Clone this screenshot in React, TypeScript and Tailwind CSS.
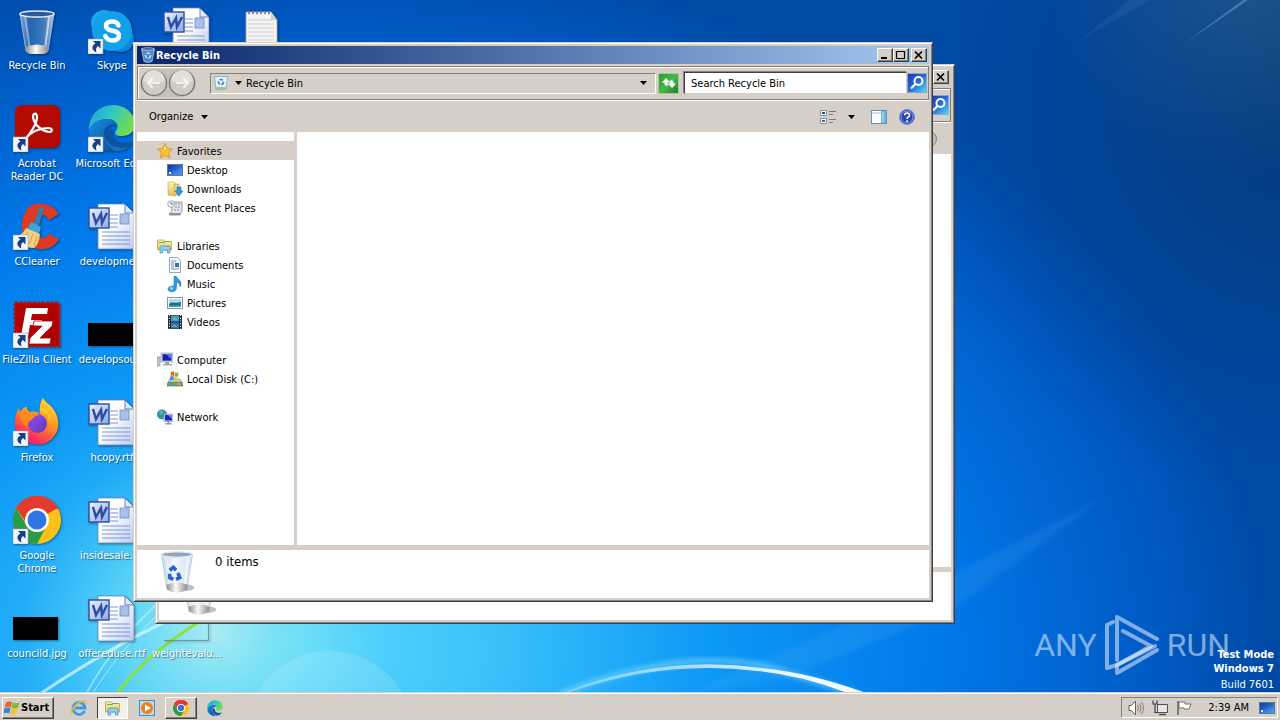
import type { ReactNode } from "react";
import clsx from "clsx";

const uiFont = "font-['Tahoma','DejaVu_Sans_Condensed','Roboto',sans-serif]";
const boldFont = "font-['Tahoma','DejaVu_Sans_Condensed','Roboto',sans-serif] font-bold";

const raised =
  "border border-t-white border-l-white border-r-[#404040] border-b-[#404040] bg-[#d5cfc8] shadow-[inset_-1px_-1px_0_#848078]";

/* ---------- shared gradients ---------- */

function Gradients() {
  return (
    <svg className="absolute h-0 w-0" aria-hidden="true">
      <defs>
        <linearGradient id="glass" x1="0" x2="1">
          <stop offset="0" stopColor="#b9d6f2" stopOpacity=".75" />
          <stop offset=".3" stopColor="#4f8fd8" stopOpacity=".45" />
          <stop offset=".7" stopColor="#7fb2e6" stopOpacity=".5" />
          <stop offset="1" stopColor="#d8e8f6" stopOpacity=".85" />
        </linearGradient>
        <linearGradient id="paleGlass" x1="0" x2="1">
          <stop offset="0" stopColor="#c4d8ea" />
          <stop offset=".4" stopColor="#f2f8fd" />
          <stop offset="1" stopColor="#d4e2ee" />
        </linearGradient>
        <linearGradient id="base" x1="0" x2="1">
          <stop offset="0" stopColor="#8c8c8c" />
          <stop offset=".45" stopColor="#fafafa" />
          <stop offset="1" stopColor="#8a8a8a" />
        </linearGradient>
        <linearGradient id="paper" x1="0" y1="0" x2="1" y2="1">
          <stop offset=".4" stopColor="#ffffff" />
          <stop offset="1" stopColor="#b9c9f0" />
        </linearGradient>
        <linearGradient id="wordBadge" x1="0" y1="0" x2="1" y2="1">
          <stop offset="0" stopColor="#eef3ff" />
          <stop offset="1" stopColor="#8fa8e0" />
        </linearGradient>
        <linearGradient id="edgeTop" x1="0" y1="0" x2="1" y2=".4">
          <stop offset="0" stopColor="#1f9fe0" />
          <stop offset=".5" stopColor="#30c6c6" />
          <stop offset="1" stopColor="#6fdc52" />
        </linearGradient>
        <linearGradient id="edgeLow" x1="0" y1="0" x2="1" y2="1">
          <stop offset="0" stopColor="#1b8ee0" />
          <stop offset="1" stopColor="#0b4a90" />
        </linearGradient>
        <linearGradient id="foxFlame" x1=".8" y1="0" x2=".3" y2="1">
          <stop offset="0" stopColor="#ffe23c" />
          <stop offset=".45" stopColor="#ff9422" />
          <stop offset=".8" stopColor="#ff3a50" />
          <stop offset="1" stopColor="#e01890" />
        </linearGradient>
        <linearGradient id="foxCore" x1="0" y1="0" x2="1" y2="1">
          <stop offset="0" stopColor="#9b4be8" />
          <stop offset="1" stopColor="#5a3cc0" />
        </linearGradient>
        <linearGradient id="screen" x1="0" y1="0" x2="1" y2="1">
          <stop offset="0" stopColor="#0a3a9c" />
          <stop offset=".5" stopColor="#2864c8" />
          <stop offset="1" stopColor="#6ab0ec" />
        </linearGradient>
        <linearGradient id="folder" x1="0" y1="0" x2="0" y2="1">
          <stop offset="0" stopColor="#fff3b4" />
          <stop offset="1" stopColor="#e6c050" />
        </linearGradient>
      </defs>
    </svg>
  );
}

/* ---------- wallpaper ---------- */

function Wallpaper() {
  return (
    <svg
      className="absolute inset-0 h-full w-full"
      viewBox="0 0 1280 692"
      preserveAspectRatio="xMidYMid slice"
      aria-hidden="true"
    >
      <defs>
        <radialGradient id="sky" gradientUnits="userSpaceOnUse" cx="0" cy="0" r="1" gradientTransform="translate(310 650) scale(960 700)">
          <stop offset="0" stopColor="#58d6fa" />
          <stop offset=".18" stopColor="#3cc4fa" />
          <stop offset=".42" stopColor="#0c98f6" />
          <stop offset=".66" stopColor="#0078ea" />
          <stop offset=".88" stopColor="#005ac4" />
          <stop offset="1.0" stopColor="#004aa6" />
        </radialGradient>
        <radialGradient id="corner" gradientUnits="userSpaceOnUse" cx="0" cy="0" r="1" gradientTransform="translate(1320 110) scale(420 400)">
          <stop offset="0" stopColor="#043a78" />
          <stop offset=".4" stopColor="#043c80" stopOpacity=".65" />
          <stop offset="1" stopColor="#00409a" stopOpacity="0" />
        </radialGradient>
        <radialGradient id="haze" gradientUnits="userSpaceOnUse" cx="1250" cy="-20" r="200">
          <stop offset="0" stopColor="#3c6c90" stopOpacity=".45" />
          <stop offset="1" stopColor="#3c6c90" stopOpacity="0" />
        </radialGradient>
        <radialGradient id="glow" gradientUnits="userSpaceOnUse" cx="0" cy="0" r="1" gradientTransform="translate(215 630) scale(190 190)">
          <stop offset="0" stopColor="#b4f0f2" stopOpacity=".9" />
          <stop offset=".5" stopColor="#7fe6f4" stopOpacity=".5" />
          <stop offset="1" stopColor="#58d6fa" stopOpacity="0" />
        </radialGradient>
        <linearGradient id="arc" x1="0" x2="1">
          <stop offset="0" stopColor="#fff" stopOpacity=".25" />
          <stop offset=".7" stopColor="#fff" stopOpacity=".9" />
          <stop offset="1" stopColor="#fff" />
        </linearGradient>
        <filter id="soft">
          <feGaussianBlur stdDeviation="2.5" />
        </filter>
      </defs>
      <rect width="1280" height="692" fill="url(#sky)" />
      <rect width="1280" height="692" fill="url(#corner)" />
      <rect width="1280" height="692" fill="url(#haze)" />
      <rect width="1280" height="692" fill="url(#glow)" />
      <circle cx="330" cy="735" r="84" fill="#fff" opacity=".13" />
      <path d="M40 694Q120 640 200 606" stroke="#d6f6ff" strokeWidth="3" fill="none" opacity=".75" />
      <path d="M86 694Q115 640 172 590" stroke="#d6f6ff" strokeWidth="2" fill="none" opacity=".5" />
      <path d="M92 694Q125 640 185 590" stroke="#d6f6ff" strokeWidth="1" fill="none" opacity=".6" />
      <path d="M118 692Q150 650 215 612" stroke="#8ee03c" strokeWidth="3" fill="none" />
      <path d="M690 692L900 600L1100 500L950 612L780 680z" fill="#6fc4ff" opacity=".12" filter="url(#soft)" />
      <path d="M560 694Q700 640 790 674Q840 688 872 700" stroke="#8fe4ff" strokeWidth="6" fill="none" opacity=".5" filter="url(#soft)" />
      <path d="M560 694Q660 654 762 668Q820 674 884 700L864 700Q810 676 757 671Q660 659 564 694z" fill="url(#arc)" />
      <path d="M1185 43L1248 0L1243 0z" fill="#9cc4f0" opacity=".35" />
      <path d="M1080 40L1150 0L1130 0z" fill="#9cc4f0" opacity=".08" />
    </svg>
  );
}

/* ---------- large desktop art, 48 x 48 ---------- */

function Art({ children, shortcut = false }: { children: ReactNode; shortcut?: boolean }) {
  return (
    <svg className="h-12 w-12 shrink-0 drop-shadow-[1px_1px_1px_#00000066]" viewBox="0 0 48 48" aria-hidden="true">
      {children}
      {shortcut && (
        <g>
          <rect x="0" y="33" width="15" height="15" fill="#f4f6fa" stroke="#9aa8bc" strokeWidth=".6" />
          <path d="M5 35h7.500v7.500L10 40c-2 1.500-2.500 3.500-1.500 6.500-5-2-5.500-7 -1-9z" fill="#173e86" />
        </g>
      )}
    </svg>
  );
}

function BinShape({ pale = false }: { pale?: boolean }) {
  return (
    <g>
      <path d="M7 5L13 42Q24 49 35 42L41 5z" fill={pale ? "url(#paleGlass)" : "url(#glass)"} stroke="#a8c0d8" strokeWidth=".8" />
      <path d="M12 8L17 40" stroke="#fff" strokeOpacity=".4" strokeWidth="2" />
      <path d="M36 8L32 40" stroke="#fff" strokeOpacity=".6" strokeWidth="2" />
      <path d="M12.500 38Q24 33 35.500 38L35 43Q24 50 13 43z" fill="url(#base)" />
      <ellipse cx="24" cy="5" rx="17" ry="3" fill={pale ? "#8fa6bc" : "#2a5aa0"} stroke="#dfe9f2" strokeWidth="1.500" />
    </g>
  );
}

function RecycleArrows() {
  return (
    <g fill="none" stroke="#2a64cc" strokeWidth="4">
      <path d="M16 22l4-3 3 3" />
      <path d="M25 25l2 5-4 2" />
      <path d="M20 32l-4-2 0-4" />
    </g>
  );
}

function WordArt() {
  return (
    <Art>
      <path d="M10 2h27l9 9v36H10z" fill="url(#paper)" stroke="#6f86b8" strokeWidth=".8" />
      <path d="M37 2v9h9z" fill="#dfe8fb" stroke="#4a66a8" strokeWidth=".8" />
      <path d="M22 13h8M22 17h8M22 21h8M22 25h8M14 30h28M14 34h28M14 38h28M14 42h28" stroke="#7f97d4" strokeWidth="1.200" />
      <rect x="32" y="12" width="9" height="10" fill="#a9c0e8" stroke="#6f8ccc" strokeWidth=".8" />
      <rect x="1" y="6" width="20" height="20" fill="url(#wordBadge)" stroke="#2f55ac" strokeWidth="1.500" />
      <path d="M5 11l3 10 5-9 1 9 5-10" fill="none" stroke="#2a4ea8" strokeWidth="2.500" />
    </Art>
  );
}

function NotepadArt() {
  return (
    <Art>
      <path d="M8 6h25l6 8v33H8z" fill="#f4f4f2" stroke="#a8a8a8" strokeWidth=".8" />
      <path d="M33 6v8h6z" fill="#cfcfcf" />
      <path d="M10 7h22" stroke="#909090" strokeWidth="2.500" strokeDasharray="2 2" />
      <path d="M10 14h24M10 18h26M10 22h26M10 26h26M10 30h26M10 34h26M10 38h26" stroke="#c8d0d8" />
    </Art>
  );
}

function BlackArt() {
  return (
    <Art>
      <rect x="0" y="23" width="45" height="23" fill="#000" />
    </Art>
  );
}

function OutlineArt() {
  return (
    <Art>
      <path d="M1 46.500H45.500V10" fill="none" stroke="#6a8a90" strokeOpacity=".8" />
    </Art>
  );
}

function SkypeArt() {
  return (
    <Art shortcut>
      <circle cx="16" cy="17" r="13" fill="#1aa8ea" />
      <circle cx="33" cy="33" r="13" fill="#0a86dc" />
      <circle cx="24" cy="25" r="20" fill="#12a0ea" />
      <path
        d="M30.500 19.500C29.500 16.500 27.500 15.500 24 15.500c-4 0-6 1.700-6 4.300 0 6.700 13 3.200 13 9.700 0 3-2.500 5-6.500 5-3.800 0-6-1.500-7.200-4.500"
        fill="none"
        stroke="#fff"
        strokeWidth="4.500"
        strokeLinecap="round"
      />
    </Art>
  );
}

function AcrobatArt() {
  return (
    <Art shortcut>
      <rect x="2" y="1" width="45" height="43" rx="7" fill="#b30b00" />
      <path
        d="M12 35c5-5 12-15 12-22 0-5-4-4-4 0 1 8 9 14 16 15 4 0 4-4-1-4-8 0-17 4-23 11z"
        fill="none"
        stroke="#fff"
        strokeWidth="2.200"
        strokeLinejoin="round"
      />
    </Art>
  );
}

function EdgeShape() {
  return (
    <g>
      <path d="M1 27C0 12 11 1 25 1s22 10 22 19c0 8-6 12-13 12-6 0-8-2-6-5 4-6-1-12-9-12C10 15 3 20 1 27z" fill="url(#edgeTop)" />
      <path d="M1 27c2-7 9-12 18-12 5 0 9 2 10 6-6-2-13 2-13 10 0 7 5 13 11 16C12 49 1 40 1 27z" fill="url(#edgeLow)" />
      <path d="M16 31c0 9 8 14 16 14 6 0 10-3 13-8-3 1-6 2-9 2-9 0-14-6-12-14-4 0-8 2-8 6z" fill="#0e549c" />
      <path d="M27 47c-6-3-11-9-11-16 3 9 10 13 18 13 5 0 9-3 11-6-4 6-10 10-18 9z" fill="#1770c0" />
    </g>
  );
}

function CCleanerArt() {
  return (
    <Art shortcut>
      <path d="M46 12C38-1 20-2 13 9c-8 12-4 32 8 37 10 3 20 0 25-9l-10-5c-3 5-8 5-11 1-4-5-3-14 1-18 3-3 8-2 10 3z" fill="#dc3a22" />
      <path d="M27 5l4 1-5 18-6-2z" fill="#2d7fb4" />
      <path d="M18 20l10 5-2 7-12-4z" fill="#3fa4dc" />
      <path d="M13 26l14 6c-1 7-2 11-6 14-8 0-15-5-18-11 5-2 8-5 10-9z" fill="#f2cf86" />
      <path d="M15 30l-6 8M20 32l-4 10M24 34l-3 10" stroke="#d2a24c" />
    </Art>
  );
}

function FileZillaArt() {
  return (
    <Art shortcut>
      <rect x="2" y="3" width="44" height="43" fill="#b00000" stroke="#c40808" strokeWidth="3" strokeDasharray="2.500 2" />
      <path d="M13 8h22l-1 6H19l-1 6h11l-1 5H17l-2 11H8z" fill="#fff" />
      <path d="M21 21h19l-1 5-12 12h11l-1 6H16l1-6 12-12h-9z" fill="#fff" stroke="#b00000" strokeWidth=".8" />
    </Art>
  );
}

function FirefoxArt() {
  return (
    <Art shortcut>
      <path
        d="M30 0c2 4 8 7 11 12 5 7 6 18 1 25-5 8-14 11-22 9C8 43 1 35 2 23c0-5 2-10 4-13l1 4c2-3 4-5 7-5 0 2 1 4 3 5 4-1 8 0 10 2-1-5 0-12 3-16z"
        fill="url(#foxFlame)"
      />
      <circle cx="24.500" cy="25.500" r="9.500" fill="url(#foxCore)" />
      <path d="M7 18c3-4 7-5 10-4 3 0 7 1 9 4-5-1-4 2-8 4-3 2-4 3-4 7-4-2-6-7-7-11z" fill="#ff8a1c" />
      <path d="M27 12c7 2 10 8 9 14 3-7 0-15-9-17z" fill="#ffc62c" />
    </Art>
  );
}

function ChromeShape() {
  return (
    <g>
      <circle cx="24" cy="24" r="24" fill="#fbc116" />
      <path d="M24 24L3.200 12A24 24 0 0 1 44.800 12z" fill="#e33b2e" />
      <path d="M24 13H45.500A24 24 0 0 0 3.200 12L14 28z" fill="#e33b2e" />
      <path d="M3.200 12L14.500 31 24 35 33 31 24 48A24 24 0 0 1 3.200 12z" fill="#2a9c48" />
      <circle cx="24" cy="24" r="12" fill="#fff" />
      <circle cx="24" cy="24" r="9.500" fill="#2f74e4" />
    </g>
  );
}

/* ---------- small icons, 16 x 16 ---------- */

function Small({ children, box = "0 0 16 16" }: { children: ReactNode; box?: string }) {
  return (
    <svg className="h-4 w-4 shrink-0" viewBox={box} aria-hidden="true">
      {children}
    </svg>
  );
}

const StarIcon = () => (
  <Small>
    <path d="M8 .5l2.300 5 5.200.6-3.900 3.500 1.100 5.400L8 12.400 3.300 15l1.100-5.400L.5 6.100l5.200-.6z" fill="#fcc030" stroke="#e08a18" strokeWidth=".8" />
    <path d="M8 3l1.300 3.200H6.700z" fill="#fff2b0" />
  </Small>
);

const DesktopIcon = () => (
  <Small>
    <rect x=".5" y="2.500" width="15" height="11" fill="url(#screen)" stroke="#5878a8" />
    <path d="M1 13c3-4 8-4 14-7v7z" fill="#3a8ce4" opacity=".5" />
    <rect x="2" y="10" width="2" height="2" fill="#d8f0ff" />
  </Small>
);

const DownloadsIcon = () => (
  <Small>
    <path d="M1 1h6l2 2v12L1 14z" fill="url(#folder)" stroke="#c8a040" strokeWidth=".6" />
    <path d="M7 3h5v11H7z" fill="#f0cf70" stroke="#c8a040" strokeWidth=".6" />
    <path d="M10 6h4v4h2l-4 5-4-5h2z" fill="#2f9ae8" stroke="#1868b0" strokeWidth=".6" />
  </Small>
);

const RecentIcon = () => (
  <Small>
    <path d="M4 2h11v9l-2 4H3l2-5z" fill="#e4e8ec" stroke="#788490" strokeWidth=".8" />
    <path d="M8 4h5M8 7h5M7 10h5" stroke="#6a8cb0" strokeDasharray="2 1" />
    <path d="M2 13h12l-1 2H2z" fill="#909090" />
    <circle cx="4" cy="4" r="3.300" fill="#f0f4f8" stroke="#8090a0" strokeWidth=".7" />
    <path d="M4 2v2h2" stroke="#405060" strokeWidth=".7" fill="none" />
  </Small>
);

const LibrariesIcon = () => (
  <Small>
    <path d="M.5 2h6l1 1.500h7V12H.5z" fill="url(#folder)" stroke="#c4a040" strokeWidth=".8" />
    <path d="M2 4.500h5l1-1h5" stroke="#58b060" strokeWidth="1.200" fill="none" />
    <path d="M3 15V9.500Q3 8 4.500 8h7Q13 8 13 9.500V15h-2.500v-3h-5v3z" fill="#8ccdf0" stroke="#3f8cc4" strokeWidth=".7" />
  </Small>
);

const DocumentsIcon = () => (
  <Small>
    <path d="M2.500.5h8l3 3v12h-11z" fill="#fcfdff" stroke="#7890a8" strokeWidth=".8" />
    <path d="M4 4h5M4 6h3M4 8h3M4 10h3M4 12h8" stroke="#6a90b8" />
    <rect x="8" y="6" width="4" height="4" fill="#2f6cb4" />
  </Small>
);

const MusicIcon = () => (
  <Small>
    <path d="M9 0c1 3 5 3.500 5 8 0 1-.5 2-1 3-.2-3-1.500-4-3.500-5v6c0 2-2 4-4.500 4S1 14.500 1 13s2-3.500 6-3V0z" fill="#2f9ae0" stroke="#1670b8" strokeWidth=".5" />
    <circle cx="4.500" cy="12.500" r="1.400" fill="#a8e0ff" />
  </Small>
);

const PicturesIcon = () => (
  <Small>
    <rect x=".5" y="2.500" width="15" height="11" fill="#fff" stroke="#8098a8" />
    <rect x="2" y="4" width="12" height="8" fill="#a8e0f4" />
    <path d="M2 9c3-3 5 0 12-2v5H2z" fill="#1f7080" />
    <path d="M2 10.500h12V12H2z" fill="#3fa0c0" />
  </Small>
);

const VideosIcon = () => (
  <Small>
    <rect x="1" y="1" width="14" height="14" fill="#1c2430" />
    <rect x="4" y="1.500" width="8" height="6" fill="#3f9ad4" />
    <rect x="4" y="8.500" width="8" height="6" fill="#2f78b8" />
    <path d="M5 6l3-3 3 3zM5 13l2-3 4 3z" fill="#8cc860" opacity=".6" />
    <path d="M2.500 1v14M13.500 1v14" stroke="#e8ecf0" strokeWidth="1.200" strokeDasharray="1.200 1.500" />
  </Small>
);

const ComputerIcon = () => (
  <Small>
    <rect x="0" y="5" width="3" height="9" fill="#c8ccd0" stroke="#788088" strokeWidth=".6" />
    <rect x="4" y="1" width="12" height="9" fill="#d8dce4" stroke="#8890a0" strokeWidth=".6" />
    <rect x="5.500" y="2.200" width="9" height="6.500" fill="#1420a8" />
    <path d="M9 2.200h5.500v5z" fill="#5a78f0" />
    <path d="M8 10h4v2h3v1.500H6V12h2z" fill="#a0a6b0" />
  </Small>
);

const DiskIcon = () => (
  <Small>
    <path d="M1 11h14l1 4H0z" fill="#6aa070" stroke="#506858" strokeWidth=".6" />
    <path d="M3 8h10l2 3H1z" fill="#d0d8dc" stroke="#78868c" strokeWidth=".6" />
    <path d="M4 1q2-1 3.500 0L7 5Q5 4 3.500 5z" fill="#e8602c" />
    <path d="M8 1.300q2 1 3.500 0L11 5.300q-2 1-3.500 0z" fill="#7cb83c" />
    <path d="M3.300 5.500q2-1 3.500 0L6.300 9.500q-2-1-3.500 0z" fill="#3c8ce0" />
    <path d="M7.300 6q2 1 3.500 0l-.5 4q-2 1-3.500 0z" fill="#f4c02c" />
    <path d="M10 13h4" stroke="#e0c040" />
  </Small>
);

const NetworkIcon = () => (
  <Small>
    <circle cx="5" cy="5.500" r="5" fill="#2f8cc0" />
    <path d="M2 3q3-3 5 0-2 3-4 3zM5 8q3-1 4 1-2 2-3 1z" fill="#58c068" />
    <rect x="7" y="5" width="9" height="7.500" fill="#d0d6e8" stroke="#7080a0" strokeWidth=".5" />
    <rect x="8" y="6" width="7" height="5.500" fill="#1c24c0" />
    <path d="M11 6h4v4z" fill="#6888f4" />
    <path d="M10.500 12.500h2V14h2v1.500h-6V14h2z" fill="#8894ac" />
  </Small>
);

const HelpIcon = ({ muted = false }: { muted?: boolean }) => (
  <Small>
    <circle cx="8" cy="8" r="7.500" fill={muted ? "#b4b0aa" : "#2a48b8"} stroke={muted ? "#88847e" : "#8090c8"} />
    <circle cx="8" cy="8" r="6" fill="none" stroke={muted ? "#dcd8d2" : "#a8b8f0"} strokeWidth=".7" />
    <path d="M5.700 6.300c0-3 4.800-3 4.800 0 0 1.700-2.400 1.700-2.400 3.700M8.100 11.300v1.600" fill="none" stroke="#fff" strokeWidth="1.600" />
  </Small>
);

const Triangle = () => (
  <svg className="h-1 w-[7px] shrink-0" viewBox="0 0 7 4" aria-hidden="true">
    <path d="M0 0h7L3.500 4z" fill="#000" />
  </svg>
);

/* ---------- desktop ---------- */

type DesktopItem = { label?: string; art: ReactNode } | null;

const edge = (
  <Art shortcut>
    <EdgeShape />
  </Art>
);

const desktopItems: DesktopItem[] = [
  { label: "Recycle Bin", art: <Art><g transform="translate(0 3)"><BinShape /></g></Art> },
  { label: "Acrobat Reader DC", art: <AcrobatArt /> },
  { label: "CCleaner", art: <CCleanerArt /> },
  { label: "FileZilla Client", art: <FileZillaArt /> },
  { label: "Firefox", art: <FirefoxArt /> },
  { label: "Google Chrome", art: <Art shortcut><ChromeShape /></Art> },
  { label: "councild.jpg", art: <BlackArt /> },
  { label: "Skype", art: <SkypeArt /> },
  { label: "Microsoft Edge", art: edge },
  { label: "developme...", art: <WordArt /> },
  { label: "developsou...", art: <BlackArt /> },
  { label: "hcopy.rtf", art: <WordArt /> },
  { label: "insidesale.rtf", art: <WordArt /> },
  { label: "offereduse.rtf", art: <WordArt /> },
  { art: <WordArt /> },
  null,
  null,
  null,
  null,
  null,
  { label: "weightevalu...", art: <OutlineArt /> },
  { art: <NotepadArt /> },
];

const wrappedLabels = ["Acrobat Reader DC", "Google Chrome"];

function DesktopGrid() {
  return (
    <div className="relative grid auto-cols-[74px] grid-flow-col grid-rows-[repeat(7,98px)] gap-x-px pt-1.5">
      {desktopItems.map((item, index) =>
        item ? (
          <button key={index} type="button" aria-label={item.label ?? "File"} className="flex flex-col items-center gap-[5px]">
            {item.art}
            {item.label && (
              <span
                className={clsx(
                  "text-center text-[11px] leading-[13px] text-white [text-shadow:1px_1px_1px_#00000080]",
                  wrappedLabels.includes(item.label) ? "w-16" : "whitespace-nowrap"
                )}
              >
                {item.label}
              </span>
            )}
          </button>
        ) : (
          <span key={index} />
        )
      )}
    </div>
  );
}

function Watermark() {
  return (
    <div className="absolute right-1.5 bottom-0 flex flex-col items-end">
      <div className="mr-11 -mb-[28px] flex items-center gap-2 font-['Roboto',sans-serif] text-[32px] leading-8 text-white/50">
        <span>ANY</span>
        <svg className="h-[62px] w-[54px]" viewBox="0 0 54 62" fill="none" stroke="#fff" strokeOpacity=".5" strokeWidth="4" strokeLinejoin="round" strokeLinecap="round" aria-hidden="true">
          <path d="M8 8L2 11V54L12 51L50 32" />
          <path d="M12 46V3L52 25" />
          <path d="M18 17L46 32L12 51V59L52 36" />
        </svg>
        <span>RUN</span>
      </div>
      <p className={clsx(boldFont, "text-[11px] leading-[14px] text-white")}>Test Mode</p>
      <p className={clsx(boldFont, "text-[11px] leading-[14px] text-white")}>Windows 7</p>
      <p className="mt-0.5 text-[11px] leading-[14px] text-white">Build 7601</p>
    </div>
  );
}

/* ---------- explorer windows ---------- */

function WindowFrame({ label, className, children }: { label: string; className: string; children: ReactNode }) {
  return (
    <section
      aria-label={label}
      className={clsx(
        "absolute flex h-[560px] w-[800px] flex-col border border-t-[#d5cfc8] border-r-[#404040] border-b-[#404040] border-l-[#d5cfc8] bg-[#d5cfc8] p-[3px] shadow-[inset_1px_1px_0_#fff,inset_-1px_-1px_0_#808080]",
        className
      )}
    >
      {children}
    </section>
  );
}

function CaptionButton({ label, children }: { label: string; children: ReactNode }) {
  return (
    <button type="button" aria-label={label} className={clsx(raised, "flex h-3.5 w-4 items-center justify-center")}>
      <svg className="h-2.5 w-3" viewBox="0 0 12 10" fill="none" stroke="#000" aria-hidden="true">
        {children}
      </svg>
    </button>
  );
}

const CloseButton = () => (
  <CaptionButton label="Close">
    <path d="M2 1.500l7 7M9 1.500l-7 7" strokeWidth="1.700" />
  </CaptionButton>
);

const SearchButton = () => (
  <button
    type="button"
    aria-label="Search"
    className="flex h-5 w-5 shrink-0 items-center justify-center border border-[#8fa4c8] bg-linear-to-br from-[#1c34b8] via-[#2a6cdc] to-[#58d8f8]"
  >
    <Small>
      <circle cx="9.500" cy="6" r="4" fill="none" stroke="#fff" strokeWidth="2" />
      <path d="M6.500 9L2 13.500" stroke="#fff" strokeWidth="2.200" />
    </Small>
  </button>
);

const navBand = "mt-0.5 flex h-[34px] shrink-0 items-center border border-[#848078] shadow-[inset_1px_1px_0_#fff,0_1px_0_#fff]";

type NavItem = { label: string; icon: ReactNode; root?: boolean; selected?: boolean };

const navGroups: NavItem[][] = [
  [
    { label: "Favorites", icon: <StarIcon />, root: true, selected: true },
    { label: "Desktop", icon: <DesktopIcon /> },
    { label: "Downloads", icon: <DownloadsIcon /> },
    { label: "Recent Places", icon: <RecentIcon /> },
  ],
  [
    { label: "Libraries", icon: <LibrariesIcon />, root: true },
    { label: "Documents", icon: <DocumentsIcon /> },
    { label: "Music", icon: <MusicIcon /> },
    { label: "Pictures", icon: <PicturesIcon /> },
    { label: "Videos", icon: <VideosIcon /> },
  ],
  [
    { label: "Computer", icon: <ComputerIcon />, root: true },
    { label: "Local Disk (C:)", icon: <DiskIcon /> },
  ],
  [{ label: "Network", icon: <NetworkIcon />, root: true }],
];

function NavPane() {
  return (
    <nav className="flex w-[160px] shrink-0 flex-col gap-[19px] border-r-[3px] border-[#d5cfc8] pt-[9px]">
      {navGroups.map((group) => (
        <ul key={group[0].label}>
          {group.map((item) => (
            <li key={item.label}>
              <button
                type="button"
                className={clsx(
                  "flex h-[19px] w-full items-center gap-1 text-[11px] leading-[13px]",
                  item.root ? "pl-5" : "pl-[30px]",
                  item.selected && "bg-[#d5cfc8]"
                )}
              >
                {item.icon}
                <span className="pt-px">{item.label}</span>
              </button>
            </li>
          ))}
        </ul>
      ))}
    </nav>
  );
}

function RoundArrow({ label, d }: { label: string; d: string }) {
  return (
    <button type="button" aria-label={label} disabled>
      <svg className="h-7 w-7" viewBox="0 0 28 28" aria-hidden="true">
        <circle cx="14" cy="14" r="12.500" fill="#cfcbc5" stroke="#77746e" strokeWidth="1.300" />
        <path d="M3 12a11 11 0 0 1 22 0q-11 4-22 0z" fill="#e3e0dc" />
        <path d={d} fill="none" stroke="#f8f7f5" strokeOpacity=".8" strokeWidth="2.200" />
      </svg>
    </button>
  );
}

function RecycleBinWindow() {
  return (
    <WindowFrame label="Recycle Bin" className="top-[42px] left-[133px]">
      <header className="flex h-[18px] shrink-0 items-center bg-linear-to-r from-[#0a246a] to-[#a6caf0] pr-0.5 pl-[3px]">
        <Small>
          <path d="M1.500 2L4 14.500Q8 16.500 12 14.500L14.500 2z" fill="#4f88c8" stroke="#a8c8e8" strokeWidth=".8" />
          <ellipse cx="8" cy="2" rx="6.500" ry="1.300" fill="#2c5c9c" stroke="#c8dcf0" strokeWidth=".7" />
          <circle cx="8" cy="8.500" r="2.500" fill="none" stroke="#c4e0fc" strokeWidth="1.500" strokeDasharray="3.500 1.500" />
        </Small>
        <h1 className={clsx(boldFont, "flex-1 text-[11px] leading-[13px] text-white")}>Recycle Bin</h1>
        <CaptionButton label="Minimize">
          <path d="M2 8h6" strokeWidth="2" />
        </CaptionButton>
        <CaptionButton label="Maximize">
          <path d="M1.500 1.500h8v7h-8zM1 1.500h9" strokeWidth="1.200" />
        </CaptionButton>
        <span className="w-0.5" />
        <CloseButton />
      </header>

      <div className={clsx(navBand, "pr-px pl-0.5")}>
        <div className="flex rounded-full bg-[#c4c0ba]">
          <RoundArrow label="Back" d="M20 14H9M13 9l-5 5 5 5" />
          <RoundArrow label="Forward" d="M8 14h11M15 9l5 5-5 5" />
        </div>
        <div className="ml-3.5 flex h-[21px] min-w-0 flex-1 items-center border border-t-[#808080] border-r-white border-b-white border-l-[#808080] pr-2 pl-0.5">
          <svg className="h-4 w-4 shrink-0" viewBox="0 0 16 16" aria-hidden="true">
            <path d="M1.500 1.500h13l-1.500 13H3z" fill="#e4f2f8" stroke="#8cb4cc" />
            <path d="M3 12h10v2.500H3z" fill="#9cc890" />
            <circle cx="8" cy="7" r="2.500" fill="none" stroke="#3a78d0" strokeWidth="1.500" strokeDasharray="3.500 1.500" />
          </svg>
          <button type="button" className="ml-1.5 flex flex-1 items-center gap-1 text-[11px] leading-[13px]">
            <Triangle />
            Recycle Bin
          </button>
          <button type="button" aria-label="Previous locations">
            <Triangle />
          </button>
        </div>
        <button
          type="button"
          aria-label="Refresh"
          className="ml-0.5 flex h-[21px] w-[21px] items-center justify-center border border-[#a8c8a0] bg-linear-to-br from-[#2c9c34] via-[#45b848] to-[#1c8424]"
        >
          <Small>
            <path d="M5 3L1 7.500h2.500V9Q4 12 8 10 6.500 9.500 6.500 7.500H9zM11 13l4-4.500h-2.500V7Q12 4 8 6q1.500.5 1.500 2.500H7z" fill="#fff" />
          </Small>
        </button>
        <input
          type="text"
          aria-label="Search Recycle Bin"
          defaultValue="Search Recycle Bin"
          className="ml-[5px] h-[22px] w-[223px] border border-t-[#404040] border-r-[#d5cfc8] border-b-[#d5cfc8] border-l-[#404040] bg-white pl-1.5 text-[11px] leading-[13px] text-black shadow-[-1px_-1px_0_#808080] outline-none"
        />
        <SearchButton />
      </div>

      <div className="mt-px flex h-[31px] shrink-0 items-center pr-3.5 pl-3">
        <button type="button" className="flex items-center gap-2 text-[11px] leading-[13px]">
          Organize
          <Triangle />
        </button>
        <div className="ml-auto flex items-center gap-3">
          <button type="button" aria-label="Change your view" className="flex items-center gap-3">
            <Small>
              <path d="M.5 1.500h6v5h-6zM.5 9.500h6v5h-6z" fill="#fff" stroke="#7890a8" />
              <path d="M2 4h3" stroke="#1848a0" strokeWidth="2" />
              <path d="M2 12h3" stroke="#2c8040" strokeWidth="2" />
              <path d="M9 2.500h7M9 5.500h4M9 10.500h7M9 13.500h4" stroke="#707880" />
            </Small>
            <Triangle />
          </button>
          <button type="button" aria-label="Show the preview pane" className="ml-1">
            <Small>
              <rect x=".5" y="1.500" width="15" height="13" fill="#fff" stroke="#6890b0" />
              <path d="M1 4h9" stroke="#a8c0d0" />
              <rect x="10" y="2" width="5" height="12" fill="#68b8e0" />
              <path d="M12 3v10" stroke="#c0e8f8" />
            </Small>
          </button>
          <button type="button" aria-label="Get help">
            <HelpIcon />
          </button>
        </div>
      </div>

      <div className="flex min-h-0 flex-1 bg-white">
        <NavPane />
        <main className="flex-1" />
      </div>

      <footer className="flex h-[53px] shrink-0 gap-3.5 border-t-[5px] border-[#d5cfc8] bg-white pl-[18px]">
        <svg className="h-11 w-11" viewBox="0 0 48 48" aria-hidden="true">
          <ellipse cx="30" cy="41" rx="13" ry="4" fill="#000" opacity=".25" />
          <BinShape pale />
          <RecycleArrows />
        </svg>
        <p className="pt-1 pl-0.5 text-[13px] leading-4">0 items</p>
      </footer>
    </WindowFrame>
  );
}

// Same folder opened a second time; only its right and bottom edges show.
function BackgroundWindow() {
  return (
    <WindowFrame label="Background window" className="top-[64px] left-[155px]">
      <div className="flex h-[18px] shrink-0 items-center justify-end bg-linear-to-r from-[#808080] to-[#d0cbc4] pr-0.5">
        <CloseButton />
      </div>
      <div className={clsx(navBand, "justify-end pr-px")}>
        <SearchButton />
      </div>
      <div className="mt-px flex h-[31px] shrink-0 items-center justify-end pr-3.5">
        <HelpIcon muted />
      </div>
      <div className="flex-1 bg-white" />
      <div className="h-[53px] shrink-0 border-t-[5px] border-[#d5cfc8] bg-white pl-[18px]">
        <svg className="h-11 w-11" viewBox="0 0 48 48" aria-hidden="true">
          <ellipse cx="30" cy="41" rx="13" ry="4" fill="#000" opacity=".25" />
          <BinShape pale />
        </svg>
      </div>
    </WindowFrame>
  );
}

/* ---------- taskbar ---------- */

function Taskbar() {
  return (
    <footer className="relative flex h-7 shrink-0 items-center border-t border-[#d5cfc8] bg-[#d5cfc8] px-0.5 pt-0.5 shadow-[inset_0_1px_0_#fff]">
      <button type="button" className={clsx(raised, boldFont, "flex h-[22px] w-[52px] items-center gap-px pl-px text-[11px] leading-[13px]")}>
        <Small>
          <path d="M2 2.500q3-2 6-.3L6.700 7.500Q4 6 .7 7.500z" fill="#ec6428" />
          <path d="M8.700 2.500q3 1.500 6.800 0L14 7.800q-3 1.500-6.500 0z" fill="#80bc34" />
          <path d="M.5 8.300q3-1.500 6 0L5.300 13.500Q3 12-.5 13.500z" fill="#2f84dc" />
          <path d="M7.400 8.800q3 1.500 6.400 0l-1.300 5.200q-3 1.500-6.500 0z" fill="#f8c428" />
        </Small>
        Start
      </button>

      <div className="ml-4 flex items-center">
        <button type="button" aria-label="Internet Explorer" className="flex w-[27px] justify-start">
          <svg className="h-[18px] w-[18px]" viewBox="0 0 18 18" fill="none" aria-hidden="true">
            <path d="M14.500 12A6 6 0 1 1 15 9H5" stroke="#3a9ce8" strokeWidth="2.800" />
            <path d="M2 16C-1 14 5 4 13 2q4-1 3 3" stroke="#f0c030" strokeWidth="1.500" />
          </svg>
        </button>
        <button
          type="button"
          aria-label="Windows Explorer"
          className="flex h-[22px] w-[31px] items-center justify-center border border-t-[#404040] border-r-white border-b-white border-l-[#404040] bg-[#f2f0ec]"
        >
          <LibrariesIcon />
        </button>
        <button type="button" aria-label="Media Player" className="flex w-[37px] justify-center">
          <Small>
            <rect x=".5" y=".5" width="15" height="15" fill="#b8d8f0" stroke="#4890c8" />
            <circle cx="8" cy="8" r="6" fill="#f08018" />
            <path d="M6 4.500v7L12 8z" fill="#fff" />
          </Small>
        </button>
        <button type="button" aria-label="Google Chrome" className={clsx(raised, "flex h-[22px] w-8 items-center justify-center")}>
          <Small box="0 0 48 48">
            <ChromeShape />
          </Small>
        </button>
        <button type="button" aria-label="Microsoft Edge" className="flex w-9 justify-center">
          <Small box="0 0 48 48">
            <EdgeShape />
          </Small>
        </button>
      </div>

      <div className="ml-auto flex h-[21px] items-center gap-2 border border-t-[#808080] border-r-white border-b-white border-l-[#808080] pr-0.5 pl-1.5">
        <button type="button" aria-label="Volume">
          <Small>
            <path d="M1 5.500h2.500L7.500 1v14l-4-4.500H1z" fill="#fff" stroke="#606060" />
            <path d="M9.500 5q2 3 0 6M11.500 3.500q3 4.500 0 9M13.500 2q4 6 0 12" fill="none" stroke="#808080" />
          </Small>
        </button>
        <button type="button" aria-label="Network">
          <Small>
            <path d="M5.500 4.500h10v8h-10z" fill="#e8e8e8" stroke="#505050" />
            <path d="M7 14.500h7" stroke="#505050" strokeWidth="1.500" />
            <path d="M1 .5v3.500h4V.5M3 4v8.500h3" fill="none" stroke="#404040" strokeWidth="1.200" />
          </Small>
        </button>
        <button type="button" aria-label="Action Center">
          <Small>
            <path d="M2 1v14" stroke="#606060" strokeWidth="1.500" />
            <path d="M3 2h6v2h6l-2 5H8V8H3z" fill="#fff" stroke="#707070" />
          </Small>
        </button>
        <time className="mr-0.5 ml-2 text-[11px] leading-[13px]">2:39 AM</time>
        <button type="button" aria-label="Show desktop">
          <DesktopIcon />
        </button>
      </div>
    </footer>
  );
}

export default function App() {
  return (
    <div className={clsx(uiFont, "flex h-screen flex-col overflow-hidden bg-[#0070dc] text-black")}>
      <Gradients />
      <div className="relative min-h-0 flex-1 overflow-hidden">
        <Wallpaper />
        <DesktopGrid />
        <Watermark />
        <BackgroundWindow />
        <RecycleBinWindow />
      </div>
      <Taskbar />
    </div>
  );
}
